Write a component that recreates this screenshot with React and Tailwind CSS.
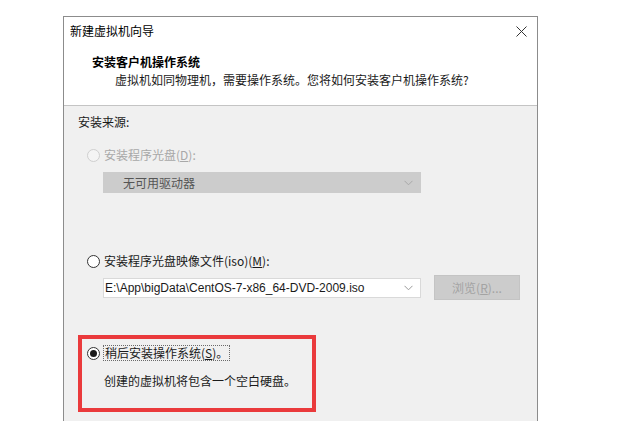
import React from "react";

const cjk = { fontFamily: '"Noto Sans CJK SC", "Noto Sans", sans-serif' };

function Chevron({ color = "#9a9a9a" }) {
  return (
    <svg width="9" height="6" viewBox="0 0 9 6" fill="none">
      <path d="M0.5 0.8 L4.5 4.8 L8.5 0.8" stroke={color} strokeWidth="1" />
    </svg>
  );
}

function Radio({ checked = false, disabled = false }) {
  return (
    <span
      className={
        "flex h-[13px] w-[13px] shrink-0 items-center justify-center rounded-full border " +
        (disabled ? "border-[#cfcfcf] bg-[#f4f4f4]" : "border-[#333333] bg-white")
      }
    >
      {checked && <span className="h-[7px] w-[7px] rounded-full bg-[#1a1a1a]" />}
    </span>
  );
}

export default function App() {
  return (
    <div className="h-[421px] w-[641px] overflow-hidden bg-white" style={cjk}>
      <div className="ml-[63px] mt-[16px] h-[420px] w-[475px] border border-[#8c8c8c] bg-[#f0f0f0]">
        {/* header */}
        <div className="h-[89px] border-b border-[#c4c4c4] bg-white">
          <div className="flex h-[28px] items-center justify-between pl-[6px] pr-[10px]">
            <span className="text-[12px] leading-[16px] text-[#000]">新建虚拟机向导</span>
            <svg width="11" height="11" viewBox="0 0 11 11">
              <path d="M0.5 0.5 L10.5 10.5 M10.5 0.5 L0.5 10.5" stroke="#333" strokeWidth="1" />
            </svg>
          </div>
          <div className="mt-[9px] pl-[28px] text-[12px] font-bold leading-[16px] text-black">
            安装客户机操作系统
          </div>
          <div className="mt-[2px] pl-[51px] text-[12px] leading-[16px] text-[#1a1a1a]">
            虚拟机如同物理机，需要操作系统。您将如何安装客户机操作系统?
          </div>
        </div>

        {/* body */}
        <div className="pt-[8px]">
          <div className="pl-[14px] text-[12px] leading-[16px] text-[#1a1a1a]">安装来源:</div>

          <div className="mt-[17px] flex items-center gap-[4px] pl-[23px] text-[12px] leading-[16px] text-[#a8a8a8]">
            <Radio disabled />
            <span>
              安装程序光盘(<span className="underline">D</span>):
            </span>
          </div>

          <div className="ml-[39px] mt-[9px] flex h-[21px] w-[318px] items-center justify-between border border-[#cccccc] bg-[#cccccc] pl-[19px] pr-[7px]">
            <span className="text-[12px] leading-[16px] text-[#555555]">无可用驱动器</span>
            <Chevron color="#a8a8a8" />
          </div>

          <div className="mt-[60px] flex items-center gap-[4px] pl-[23px] text-[12px] leading-[16px] text-[#1a1a1a]">
            <Radio />
            <span>
              安装程序光盘映像文件(iso)(<span className="underline">M</span>):
            </span>
          </div>

          <div className="ml-[39px] mt-[6px] flex h-[25px] items-center gap-[13px]">
            <div className="flex h-[20px] w-[318px] items-center justify-between border border-[#d9d9d9] bg-white pl-[1px] pr-[7px]">
              <span
                className="text-[12px] leading-[16px] text-[#1a1a1a]"
                style={{ fontFamily: '"Liberation Sans", "Noto Sans", sans-serif' }}
              >
                E:\App\bigData\CentOS-7-x86_64-DVD-2009.iso
              </span>
              <Chevron />
            </div>
            <div className="flex h-[25px] w-[86px] items-center justify-center border border-[#c4c4c4] bg-[#cccccc] text-[12px] leading-[16px] text-[#a3a3a3]">
              浏览(<span className="underline">R</span>)...
            </div>
          </div>

          <div className="ml-[14px] mt-[35px] h-[77px] w-[238px] border-[4px] border-[#ea3a3c] pl-[5px] pt-[6px]">
            <div className="flex items-center gap-[3px] text-[12px] leading-[16px] text-[#1a1a1a]">
              <Radio checked />
              <span className="border border-dotted border-[#6a6a6a] px-[1px] leading-[14px]">
                稍后安装操作系统(<span className="underline">S</span>)。
              </span>
            </div>
            <div className="mt-[12px] pl-[17px] text-[12px] leading-[16px] text-[#1a1a1a]">
              创建的虚拟机将包含一个空白硬盘。
            </div>
          </div>
        </div>
      </div>
    </div>
  );
}
